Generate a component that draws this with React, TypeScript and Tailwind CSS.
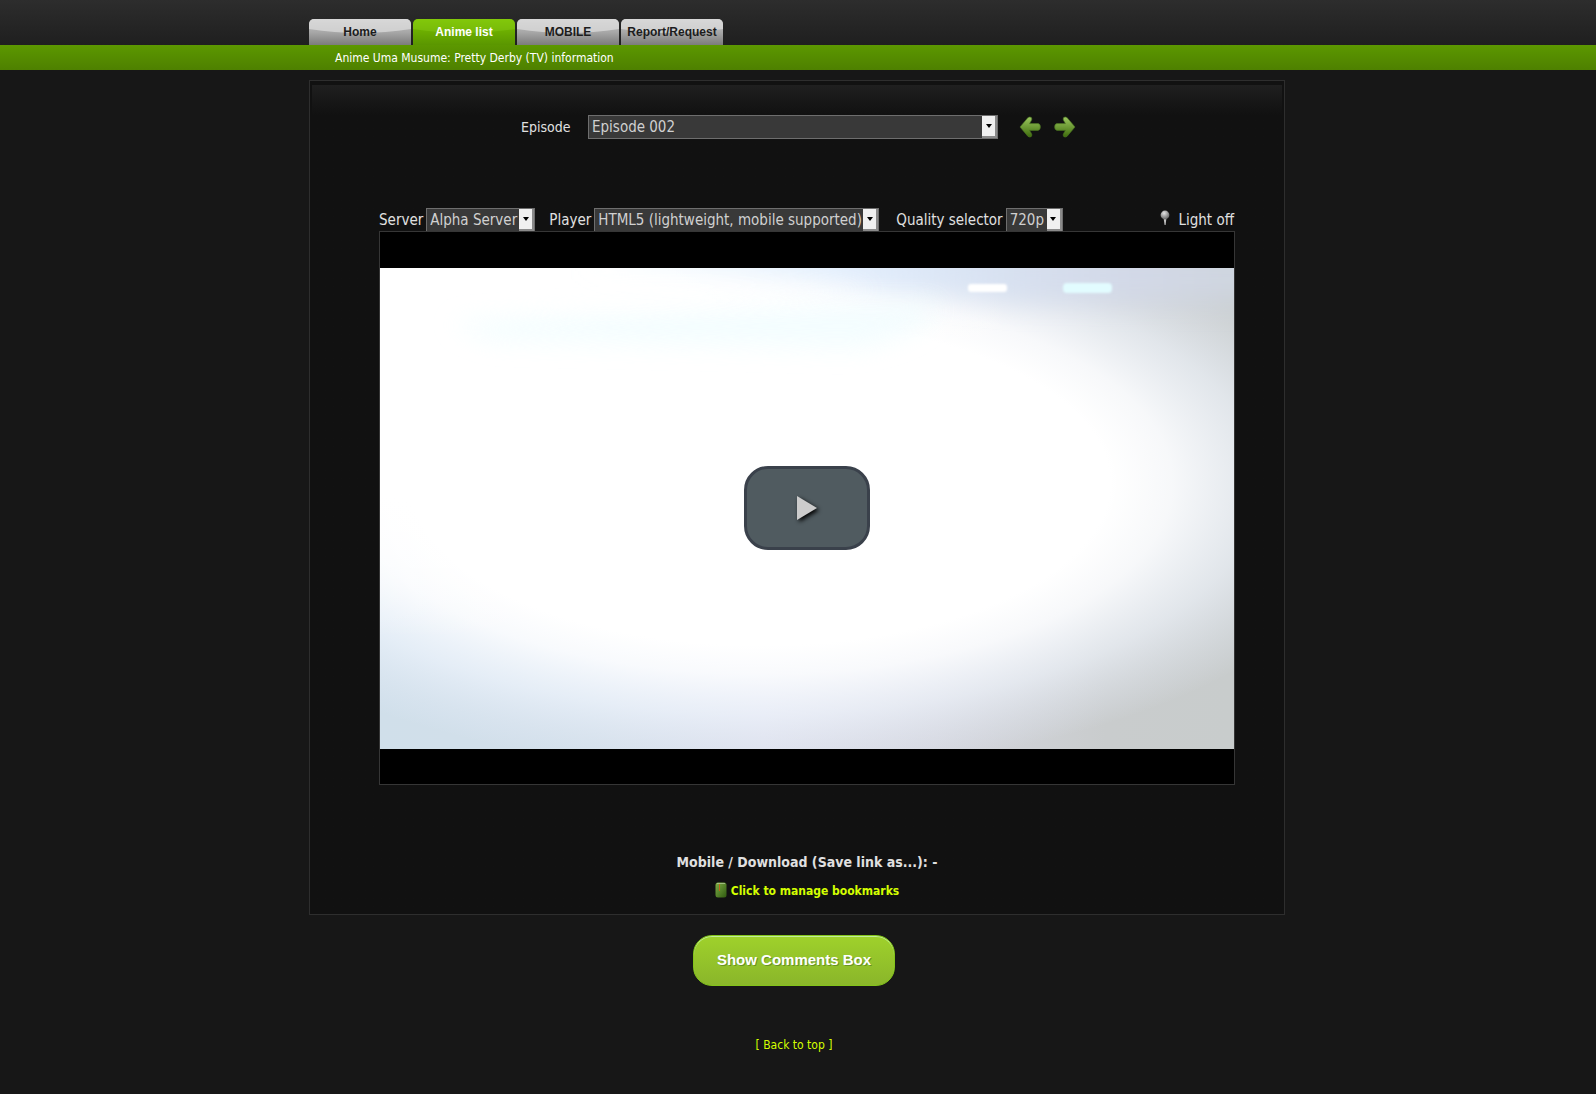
import type { ReactNode } from "react"

const tabs = [
  { name: "Home", active: false },
  { name: "Anime list", active: true },
  { name: "MOBILE", active: false },
  { name: "Report/Request", active: false },
]

const Header = () => {
  return (
    <header>
      <div className="h-[45px] bg-linear-to-b from-[#2d2d2d] to-[#1f1f1f]">
        <nav className="mx-auto flex w-[980px] max-w-full gap-0.5 pl-px pt-[19px]">
          {tabs.map((tab) => (
            <a
              key={tab.name}
              href="#"
              className={
                tab.active
                  ? "relative flex h-[26px] w-[102px] items-center justify-center overflow-hidden rounded-t-[5px] bg-linear-to-b from-[#7cc400] to-[#5a9600] font-['Liberation_Sans',Arial,sans-serif] text-xs font-bold text-white"
                  : "relative flex h-[26px] w-[102px] items-center justify-center overflow-hidden rounded-t-[5px] bg-linear-to-b from-[#c8c8c8] via-[#a8a8a8] to-[#7c7c7c] font-['Liberation_Sans',Arial,sans-serif] text-xs font-bold text-[#1c1c1c]"
              }
            >
              <svg className="absolute inset-0 h-full w-full" viewBox="0 0 102 26" preserveAspectRatio="none" aria-hidden="true">
                <path d="M0 0H102V10Q51 18 0 10Z" fill={tab.active ? "#8fd21c" : "#dcdcdc"} opacity={tab.active ? 0.35 : 0.75} />
              </svg>
              <span className="relative">{tab.name}</span>
            </a>
          ))}
        </nav>
      </div>
      <div className="h-[25px] bg-linear-to-b from-[#5c9800] to-[#4e8000]">
        <div className="mx-auto w-[980px] max-w-full pl-[27px]">
          <a href="#" className="text-xs leading-[25px] text-white">
            Anime Uma Musume: Pretty Derby (TV) information
          </a>
        </div>
      </div>
    </header>
  )
}

const SelectBox = ({ id, value, width }: { id: string; value: string; width: string }) => {
  return (
    <div className={`relative h-6 shrink-0 border border-[#6e6e6e] bg-[#393939] ${width}`}>
      <select id={id} className="block h-full w-full appearance-none bg-transparent pl-[3px] text-[15px] text-[#d0d0d0] outline-none">
        <option>{value}</option>
      </select>
      <span className="pointer-events-none absolute inset-y-0 right-0 flex w-[15px] items-center justify-center border-b-2 border-r-2 border-[#8a8a8a] bg-[#f0f0f0]">
        <svg width="6" height="4" viewBox="0 0 6 4" aria-hidden="true">
          <path d="M0 0H6L3 4Z" fill="#000" />
        </svg>
      </span>
    </div>
  )
}

const ArrowIcon = ({ flip }: { flip?: boolean }) => {
  const id = flip ? "arrow-right" : "arrow-left"
  return (
    <svg width="22" height="22" viewBox="0 0 22 22" className={flip ? "rotate-y-180" : ""} aria-hidden="true">
      <defs>
        <linearGradient id={id} x1="0" y1="0" x2="0" y2="1">
          <stop offset="0" stopColor="#9cc860" />
          <stop offset="1" stopColor="#3f6c0c" />
        </linearGradient>
      </defs>
      <path
        d="M1 11L9 1.6Q11 .2 12.4 1.6Q13.4 3 12.4 4.6L10.6 7.6H19Q21.4 8 21.4 11Q21.4 14 19 14.4H10.6L12.4 17.4Q13.4 19 12.4 20.4Q11 21.8 9 20.4Z"
        fill={`url(#${id})`}
        stroke="#4a7420"
        strokeOpacity="0.6"
      />
    </svg>
  )
}

const EpisodeBar = () => {
  return (
    <div className="flex items-center pl-[189px]">
      <label htmlFor="episode" className="w-[67px] text-sm text-[#e0e0e0]">
        Episode
      </label>
      <SelectBox id="episode" value="Episode 002" width="w-[410px]" />
      <a href="#" aria-label="Previous episode" className="ml-[21px]">
        <ArrowIcon />
      </a>
      <a href="#" aria-label="Next episode" className="ml-[13px]">
        <ArrowIcon flip />
      </a>
    </div>
  )
}

const Field = ({ id, label, children }: { id: string; label: string; children: ReactNode }) => {
  return (
    <div className="flex items-center gap-[3px]">
      <label htmlFor={id} className="whitespace-nowrap">
        {label}
      </label>
      {children}
    </div>
  )
}

const PlayerOptions = () => {
  return (
    <div className="flex h-[23px] items-start overflow-hidden text-[15px] text-[#e0e0e0]">
      <Field id="server" label="Server">
        <SelectBox id="server" value="Alpha Server" width="w-[109px]" />
      </Field>
      <div className="ml-[14px]">
        <Field id="player" label="Player">
          <SelectBox id="player" value="HTML5 (lightweight, mobile supported)" width="w-[285px]" />
        </Field>
      </div>
      <div className="ml-[17px]">
        <Field id="quality" label="Quality selector">
          <SelectBox id="quality" value="720p" width="w-[57px]" />
        </Field>
      </div>
      <a href="#" className="ml-auto flex h-6 items-center gap-1 pr-px">
        <svg width="14" height="16" viewBox="0 0 14 16" className="mb-1" aria-hidden="true">
          <defs>
            <radialGradient id="bulb" cx="0.4" cy="0.3" r="0.7">
              <stop offset="0" stopColor="#e4e4e4" />
              <stop offset="1" stopColor="#666" />
            </radialGradient>
          </defs>
          <path d="M3.6 8H6.4L5.6 15H4.6Z" fill="#c4c4c4" />
          <circle cx="5" cy="5" r="4.4" fill="url(#bulb)" />
        </svg>
        Light off
      </a>
    </div>
  )
}

const VideoFrame = () => {
  return (
    <svg className="block w-full" viewBox="0 0 854 481" aria-hidden="true">
      <defs>
        <linearGradient id="room" x1="0" y1="0" x2="1" y2="0">
          <stop offset="0" stopColor="#d0dfea" />
          <stop offset="0.25" stopColor="#d3dfea" />
          <stop offset="0.45" stopColor="#dcdfeb" />
          <stop offset="0.65" stopColor="#d4d6de" />
          <stop offset="0.85" stopColor="#c9cccd" />
          <stop offset="1" stopColor="#c8cccc" />
        </linearGradient>
        <radialGradient id="glow" gradientUnits="userSpaceOnUse" cx="0" cy="0" r="1" gradientTransform="translate(380 215) scale(625 290)">
          <stop offset="0.56" stopColor="#fff" />
          <stop offset="0.66" stopColor="#fcfdff" stopOpacity="0.9" />
          <stop offset="0.8" stopColor="#f2f7ff" stopOpacity="0.6" />
          <stop offset="0.92" stopColor="#eaf0fb" stopOpacity="0.25" />
          <stop offset="1" stopColor="#e8eeff" stopOpacity="0" />
        </radialGradient>
        <radialGradient id="corner" gradientUnits="userSpaceOnUse" cx="0" cy="0" r="1" gradientTransform="translate(60 90) scale(580 280)">
          <stop offset="0.5" stopColor="#fff" />
          <stop offset="1" stopColor="#fff" stopOpacity="0" />
        </radialGradient>
        <linearGradient id="ceiling" x1="0" y1="0" x2="1" y2="0">
          <stop offset="0.1" stopColor="#dcf4ff" stopOpacity="0" />
          <stop offset="0.45" stopColor="#dcebfd" stopOpacity="0.8" />
          <stop offset="0.8" stopColor="#d3d9e8" />
          <stop offset="1" stopColor="#cdd4dc" />
        </linearGradient>
        <filter id="soft" x="-20%" y="-100%" width="140%" height="300%">
          <feGaussianBlur stdDeviation="12" />
        </filter>
        <filter id="edge" x="-20%" y="-50%" width="140%" height="200%">
          <feGaussianBlur stdDeviation="1" />
        </filter>
      </defs>
      <rect width="854" height="481" fill="url(#room)" />
      <rect width="854" height="481" fill="url(#glow)" />
      <rect width="854" height="481" fill="url(#corner)" />
      <path d="M120 -20H900V35H640Q380 8 120 0Z" fill="url(#ceiling)" filter="url(#soft)" />
      <path d="M70 55Q300 36 560 36Q540 72 470 80Q250 75 110 72Z" fill="#effdff" opacity="0.7" filter="url(#soft)" />
      <path d="M60 22Q300 10 500 20Q400 38 200 38Z" fill="#fff" opacity="0.8" filter="url(#soft)" />
      <rect x="588" y="16" width="39" height="8" rx="3" fill="#fff" filter="url(#edge)" />
      <rect x="683" y="15" width="49" height="10" rx="4" fill="#e2fcff" filter="url(#edge)" />
    </svg>
  )
}

const Player = () => {
  return (
    <div className="relative border border-[#363636] bg-black pb-[35px] pt-9">
      <VideoFrame />
      <div className="absolute inset-0 flex items-center justify-center">
        <button
          type="button"
          aria-label="Play"
          className="flex h-[84px] w-[126px] items-center justify-center rounded-[24px] border-[3px] border-[#3a414b] bg-[#505b60]"
        >
          <svg width="24" height="28" viewBox="0 0 24 28" className="drop-shadow-[2px_2px_2px_#000]" aria-hidden="true">
            <path d="M2 2L22 14L2 26Z" fill="#ccc" />
          </svg>
        </button>
      </div>
    </div>
  )
}

const Downloads = () => {
  return (
    <div className="flex flex-col items-center gap-2.5 font-bold">
      <p className="text-sm text-[#e0e0e0]">Mobile / Download (Save link as...): -</p>
      <a href="#" className="flex items-center gap-1 text-xs text-[#d4ff00]">
        <svg width="12" height="16" viewBox="0 0 12 16" className="mb-0.5" aria-hidden="true">
          <defs>
            <linearGradient id="book" x1="0" y1="0" x2="1" y2="1">
              <stop offset="0" stopColor="#7fae45" />
              <stop offset="1" stopColor="#2f5a10" />
            </linearGradient>
          </defs>
          <rect x="0.5" y="0.5" width="11" height="15" rx="2.5" fill="url(#book)" />
          <path d="M2 1.5H10" stroke="#b9cfa0" strokeOpacity="0.7" />
          <path d="M4.5 2V9" stroke="#c2601c" />
        </svg>
        Click to manage bookmarks
      </a>
    </div>
  )
}

const App = () => {
  return (
    <div className="min-h-screen bg-[#171717] font-['DejaVu_Sans_Condensed','DejaVu_Sans',Tahoma,sans-serif]">
      <Header />
      <main className="mx-auto w-[980px] max-w-full pl-px pr-[3px] pt-2.5">
        <section className="border border-[#2e2e2e] bg-[#111] px-0.5 pt-1">
          <div className="bg-linear-to-b from-[#1f1f1f] to-[#111] to-[30px] pb-3.5 pl-5 pt-[30px]">
            <EpisodeBar />
            <div className="mx-auto mt-[69px] w-[856px] max-w-full">
              <PlayerOptions />
              <Player />
            </div>
            <div className="mt-[67px]">
              <Downloads />
            </div>
          </div>
        </section>
        <div className="flex w-[970px] max-w-full flex-col items-center pb-10 pt-5">
          <button
            type="button"
            className="h-[51px] w-[202px] rounded-[19px] border border-[#83c41a] bg-linear-to-b from-[#9fd12b] to-[#8ab62a] font-['Liberation_Sans',Arial,sans-serif] text-[15px] font-bold text-white shadow-[inset_0_1px_0_0_#c1ed9c] [text-shadow:1px_1px_0_#689324]"
          >
            Show Comments Box
          </button>
          <a href="#" className="mt-[51px] text-xs text-[#d4ff00]">
            [ Back to top ]
          </a>
        </div>
      </main>
    </div>
  )
}

export default App
